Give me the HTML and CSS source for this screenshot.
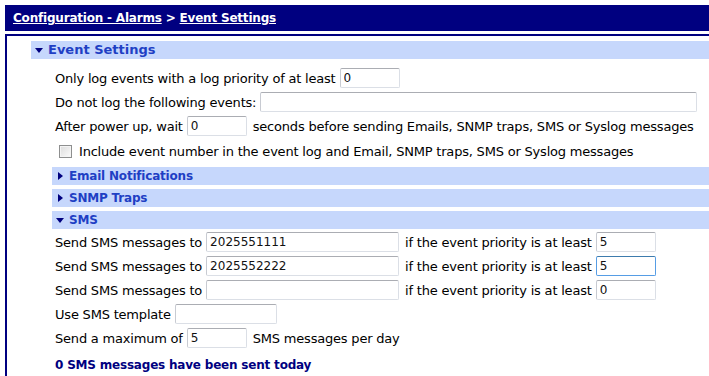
FILE: index.html
```html
<!DOCTYPE html>
<html lang="en">
<head>
  <meta charset="UTF-8">
  <title>Configuration - Alarms &gt; Event Settings</title>
  <link rel="stylesheet" href="styles.css">
</head>
<body>

  <div class="titlebar">
    <a href="#">Configuration - Alarms</a> &gt; <a href="#">Event Settings</a>
  </div>

  <div class="panel">
    <div class="bar open main">Event Settings</div>

    <div class="rows">
      <div class="row">Only log events with a log priority of at least <input class="short" value="0"></div>
      <div class="row">Do not log the following events: <input class="wide" value=""></div>
      <div class="row">After power up, wait <input class="short" value="0"> seconds before sending Emails, SNMP traps, SMS or Syslog messages</div>
      <div class="row check"><span class="box"></span> Include event number in the event log and Email, SNMP traps, SMS or Syslog messages</div>
    </div>

    <div class="sub">
      <div class="bar closed">Email Notifications</div>
      <div class="bar closed">SNMP Traps</div>
      <div class="bar open">SMS</div>
    </div>

    <div class="rows sms">
      <div class="row">Send SMS messages to <input class="phone" value="2025551111"> if the event priority is at least <input class="short" value="5"></div>
      <div class="row">Send SMS messages to <input class="phone" value="2025552222"> if the event priority is at least <input class="short focus" value="5"></div>
      <div class="row">Send SMS messages to <input class="phone" value=""> if the event priority is at least <input class="short" value="0"></div>
      <div class="row">Use SMS template <input class="tmpl" value=""></div>
      <div class="row">Send a maximum of <input class="short" value="5"> SMS messages per day</div>
      <div class="sent">0 SMS messages have been sent today</div>
    </div>
  </div>

</body>
</html>
```

FILE: styles.css
```css
body {
  margin: 5px 0 0 5px;
  font-family: "DejaVu Sans", Verdana, sans-serif;
  font-size: 13px;
  letter-spacing: -0.2px;
  color: #000;
  background: #fff;
}

.titlebar {
  background: #000080;
  color: #fff;
  font-weight: bold;
  font-size: 12px;
  height: 26px;
  line-height: 26px;
  padding-left: 8px;
  white-space: nowrap;
}

.titlebar a {
  color: #fff;
}

.panel {
  margin-top: 3px;
  border-top: 2px solid #000080;
  border-left: 2px solid #000080;
  padding: 5px 0 10px 24px;
  min-height: 340px;
}

.bar {
  background: #c6d7fc;
  color: #1f3fc4;
  font-weight: bold;
  font-size: 12px;
  height: 18px;
  line-height: 18px;
  padding-left: 17px;
  position: relative;
  margin-bottom: 4px;
}

.bar.main {
  font-size: 13px;
  letter-spacing: 0;
}

.bar::before {
  content: "";
  position: absolute;
  border-style: solid;
  border-color: transparent;
}

.bar.open::before {
  top: 7px;
  left: 4px;
  border-width: 5px 4px 0 4px;
  border-top-color: #000080;
}

.bar.closed::before {
  top: 5px;
  left: 6px;
  border-width: 4px 0 4px 5px;
  border-left-color: #000080;
}

.rows {
  padding-left: 24px;
  padding-top: 3px;
  white-space: nowrap;
}

.row {
  height: 24px;
  display: flex;
  align-items: center;
  gap: 4px;
}

.row input {
  font-family: inherit;
  font-size: 12px;
  letter-spacing: 0;
  color: #111;
  height: 20px;
  box-sizing: border-box;
  border: 1px solid #dbdfe6;
  border-top-color: #abadb3;
  border-left-color: #c8cbd2;
  border-radius: 2px;
  padding: 0 3px;
  margin: 0 2px 0 0;
  outline: none;
}

.row input.focus {
  border-color: #569de5;
  border-top-color: #3d7bad;
}

.short { width: 60px; }
.wide { width: 437px; }
.phone { width: 193px; }
.tmpl { width: 102px; }

.row.check {
  height: 27px;
  padding-left: 4px;
  gap: 7px;
  margin-bottom: 2px;
}

.box {
  width: 11px;
  height: 11px;
  border: 1px solid #8e8f8f;
  background: linear-gradient(135deg, #dcdcdc, #fbfbfb);
  box-shadow: inset 0 0 0 1px #f4f4f4;
}

.sub {
  padding-left: 21px;
}

.sub .bar:last-child {
  margin-bottom: 0;
}

.rows.sms {
  padding-top: 1px;
}

.sent {
  color: #000080;
  font-weight: bold;
  font-size: 12px;
  margin-top: 8px;
}
```
